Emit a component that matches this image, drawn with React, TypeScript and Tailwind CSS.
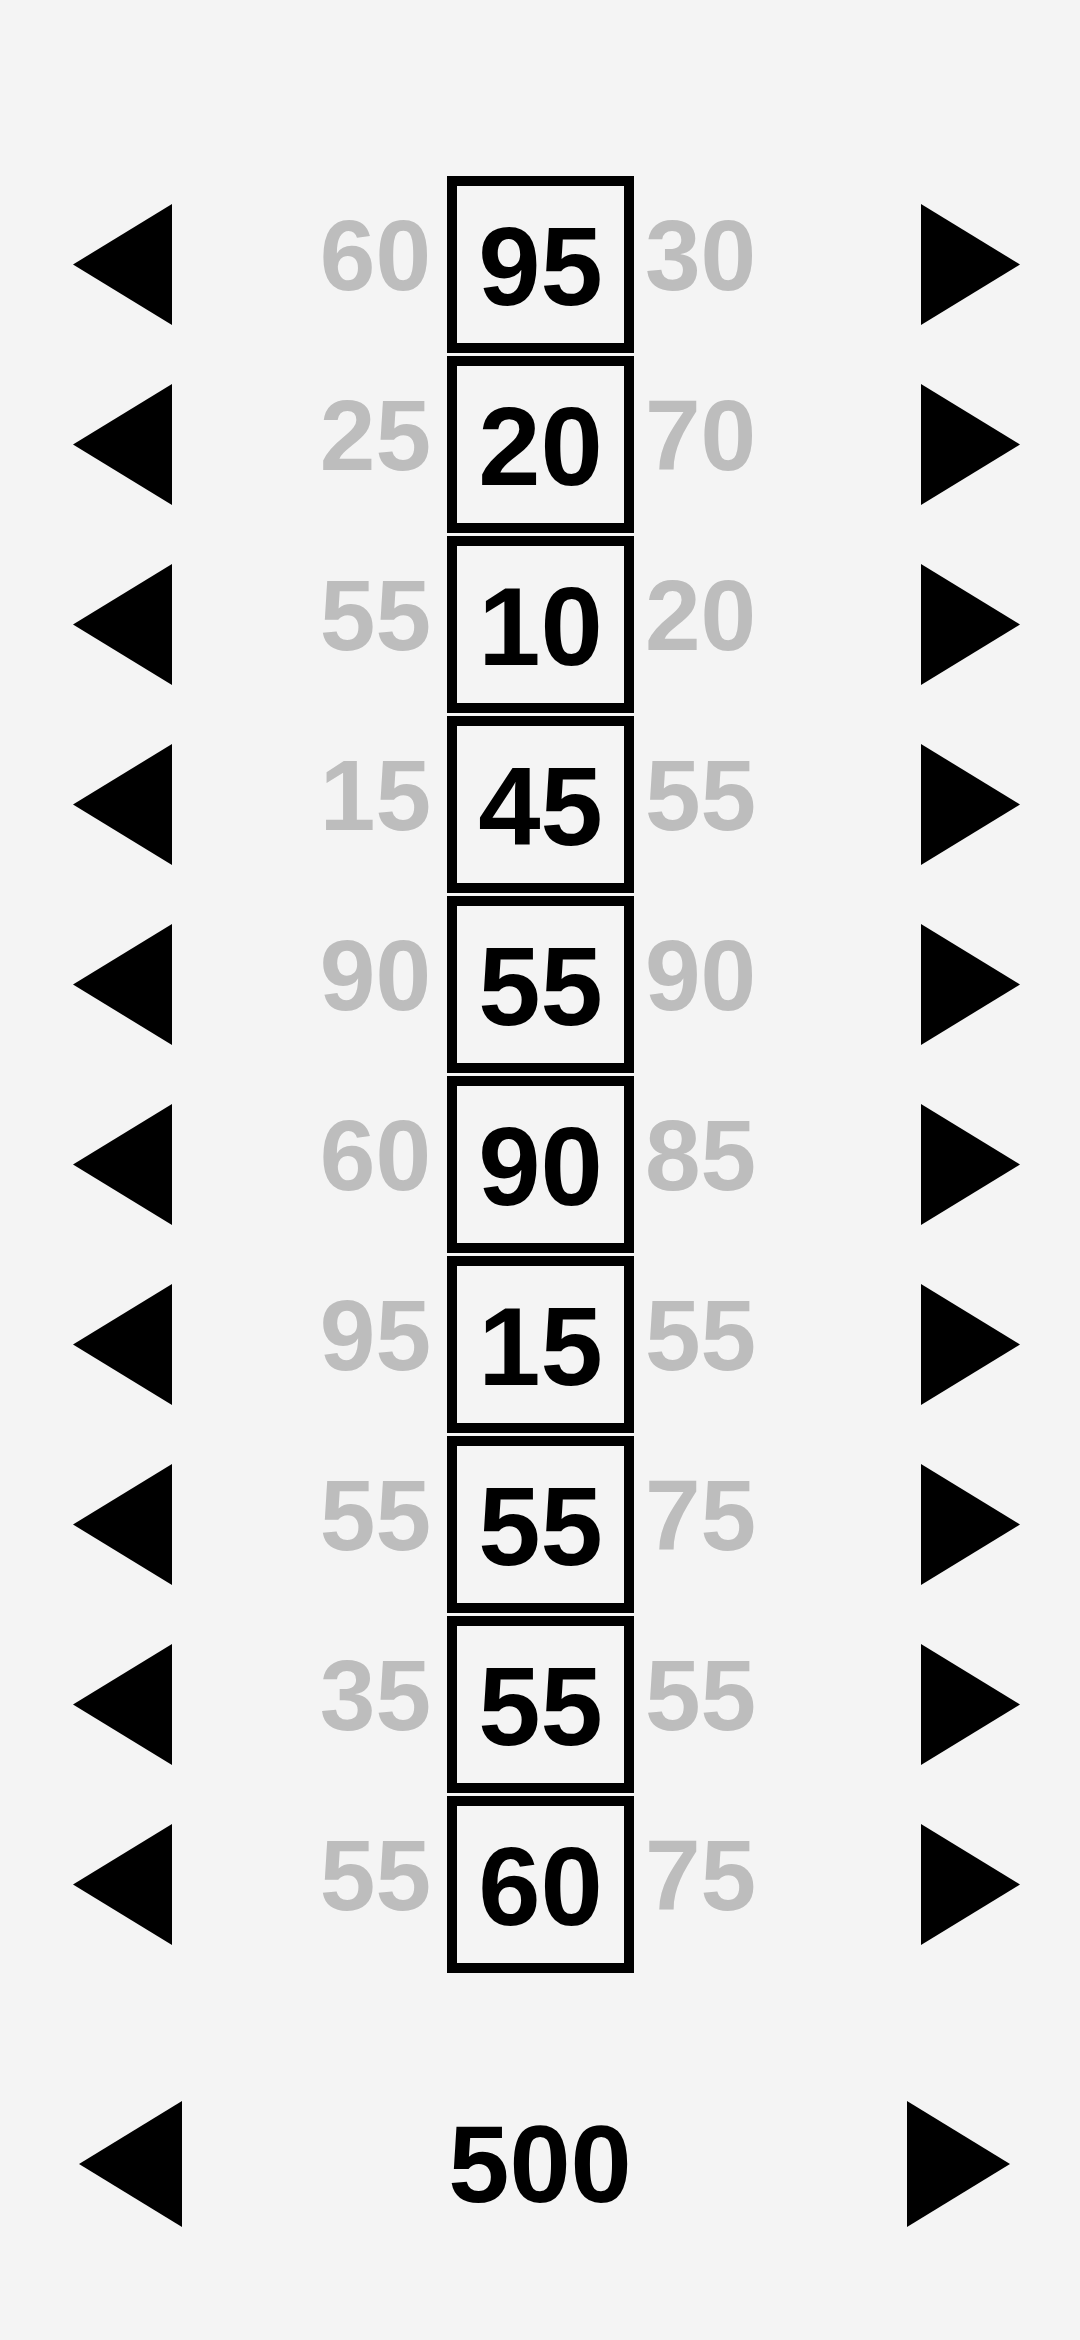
import React from 'react';

type Row = { left: number; value: number; right: number };

const rows: Row[] = [
  { left: 60, value: 95, right: 30 },
  { left: 25, value: 20, right: 70 },
  { left: 55, value: 10, right: 20 },
  { left: 15, value: 45, right: 55 },
  { left: 90, value: 55, right: 90 },
  { left: 60, value: 90, right: 85 },
  { left: 95, value: 15, right: 55 },
  { left: 55, value: 55, right: 75 },
  { left: 35, value: 55, right: 55 },
  { left: 55, value: 60, right: 75 },
];

function Arrow({ dir, className }: { dir: 'left' | 'right'; className: string }) {
  const points = dir === 'left' ? '0,50 100,0 100,100' : '0,0 100,50 0,100';
  return (
    <svg viewBox="0 0 100 100" preserveAspectRatio="none" className={className}>
      <polygon points={points} fill="#000" />
    </svg>
  );
}

function PickerRow({ row }: { row: Row }) {
  return (
    <div className="flex h-[180px] items-center">
      <button className="ml-[73px] shrink-0">
        <Arrow dir="left" className="block h-[121px] w-[99px]" />
      </button>
      <div className="w-[259px] shrink-0 pb-[18px] text-right text-[100px] font-bold leading-none text-[#bdbdbd]">
        {row.left}
      </div>
      <div className="ml-[16px] flex h-[177px] w-[187px] shrink-0 items-center justify-center border-[10px] border-black pt-[6px] text-[112px] font-bold leading-none text-black">
        {row.value}
      </div>
      <div className="ml-[11px] w-[276px] shrink-0 pb-[18px] text-left text-[100px] font-bold leading-none text-[#bdbdbd]">
        {row.right}
      </div>
      <button className="shrink-0">
        <Arrow dir="right" className="block h-[121px] w-[99px]" />
      </button>
    </div>
  );
}

export default function App() {
  const total = rows.reduce((sum, row) => sum + row.value, 0);

  return (
    <div className="min-h-[2340px] w-[1080px] bg-[#f4f4f4] pt-[174px] font-['Liberation_Sans',Arial,sans-serif]">
      <div className="flex flex-col">
        {rows.map((row, i) => (
          <PickerRow key={i} row={row} />
        ))}
      </div>

      <div className="mt-[127px] flex h-[126px] items-center">
        <button className="ml-[79px] shrink-0">
          <Arrow dir="left" className="block h-[126px] w-[103px]" />
        </button>
        <div className="w-[725px] shrink-0 pr-[9px] text-center text-[110px] font-bold leading-none text-black">
          {total}
        </div>
        <button className="shrink-0">
          <Arrow dir="right" className="block h-[126px] w-[103px]" />
        </button>
      </div>
    </div>
  );
}
